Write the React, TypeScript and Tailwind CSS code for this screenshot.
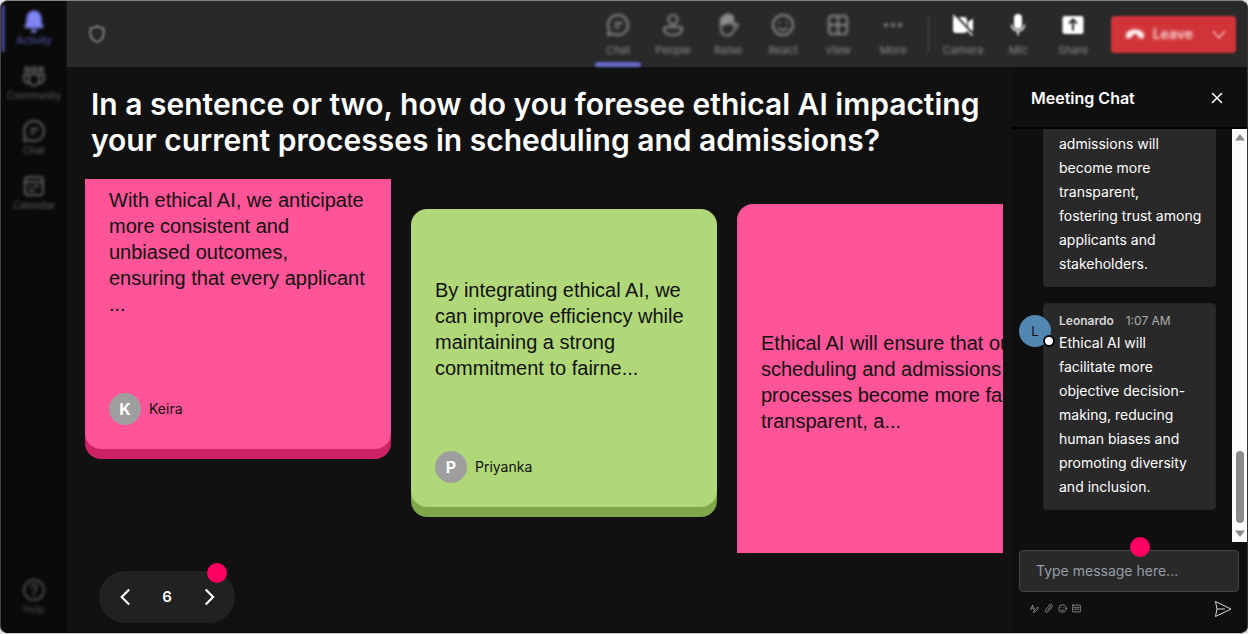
import React from 'react';
import { X } from 'lucide-react';

const stroke = {
  viewBox: '0 0 24 24',
  fill: 'none',
  stroke: 'currentColor',
  strokeWidth: 2,
  strokeLinecap: 'round' as const,
  strokeLinejoin: 'round' as const,
};

type IconProps = { className?: string };

const BellIcon = ({ className }: IconProps) => (
  <svg viewBox="0 0 24 24" fill="currentColor" className={className}>
    <path d="M12 1.5a7.5 7.5 0 0 0-7.5 7.5v4.2L2.6 17.6A1 1 0 0 0 3.500 19h17a1 1 0 0 0 .9-1.400L19.500 13.200V9A7.500 7.500 0 0 0 12 1.500zM8.800 20.500a3.200 3.200 0 0 0 6.400 0z" />
  </svg>
);

const CommunityIcon = ({ className }: IconProps) => (
  <svg {...stroke} className={className}>
    <circle cx="5" cy="5.500" r="2" />
    <circle cx="12" cy="5.500" r="2.300" />
    <circle cx="19" cy="5.500" r="2" />
    <path d="M7 10.500h10v6a5 5 0 0 1-10 0zM7 10.500H2v4.500a4 4 0 0 0 5.500 3.700M17 10.500h5v4.500a4 4 0 0 1-5.500 3.700" />
  </svg>
);

const ChatIcon = ({ className }: IconProps) => (
  <svg {...stroke} className={className}>
    <path d="M12 2a10 10 0 1 1-4.700 18.800L2 22l1.200-5.300A10 10 0 0 1 12 2z" />
    <path d="M9 10h6.500M9 14h3.500" />
  </svg>
);

const CalendarIcon = ({ className }: IconProps) => (
  <svg {...stroke} className={className}>
    <rect x="3" y="3" width="18" height="18" rx="3" />
    <path d="M3 8h18M7.500 12.500h.5M12 12.500h4.500M7.500 16.500H12" />
  </svg>
);

const HelpIcon = ({ className }: IconProps) => (
  <svg {...stroke} className={className}>
    <circle cx="12" cy="12" r="10" />
    <path d="M9.300 9.500a2.700 2.700 0 1 1 4.500 2c-1 .9-1.800 1.300-1.800 2.500M12 17v.3" />
  </svg>
);

const ShieldIcon = ({ className }: IconProps) => (
  <svg {...stroke} className={className}>
    <path d="M12 2.500c2.300 1.800 5 2.700 8 2.800v6c0 5-2.800 8.300-8 10.200-5.200-1.900-8-5.200-8-10.200v-6c3-.1 5.700-1 8-2.800z" />
  </svg>
);

const PeopleIcon = ({ className }: IconProps) => (
  <svg {...stroke} className={className}>
    <circle cx="12" cy="6.500" r="4.500" />
    <path d="M5 14h14a2 2 0 0 1 2 2c0 4-3.800 6-9 6s-9-2-9-6a2 2 0 0 1 2-2z" />
  </svg>
);

const RaiseIcon = ({ className }: IconProps) => (
  <svg {...stroke} className={className}>
    <path d="M5 12V6a1.500 1.500 0 0 1 3 0V3.500a1.500 1.500 0 0 1 3 0v-1a1.500 1.500 0 0 1 3 0V4a1.500 1.500 0 0 1 3 0v5z" fill="currentColor" />
    <path d="M5 11v5c0 4 2.500 6.500 6 6.500 3 0 4.500-1.200 6-3.500l4.500-6c.8-1.200-.8-2.700-2.300-1.900L17 13V5" />
  </svg>
);

const ReactIcon = ({ className }: IconProps) => (
  <svg {...stroke} className={className}>
    <circle cx="12" cy="12" r="10" />
    <path d="M8 15c1 1.300 2.400 2 4 2s3-.7 4-2M8.500 9.500v.2M15.500 9.500v.2" />
  </svg>
);

const ViewIcon = ({ className }: IconProps) => (
  <svg {...stroke} className={className}>
    <rect x="3" y="3" width="18" height="18" rx="3" />
    <path d="M12 3v18M3 12h18" />
  </svg>
);

const MoreIcon = ({ className }: IconProps) => (
  <svg viewBox="0 0 24 24" fill="currentColor" className={className}>
    <circle cx="5" cy="12" r="2" />
    <circle cx="12" cy="12" r="2" />
    <circle cx="19" cy="12" r="2" />
  </svg>
);

const CameraOffIcon = ({ className }: IconProps) => (
  <svg viewBox="0 0 24 24" className={className}>
    <path d="M2 6a2 2 0 0 1 2-2h9a3 3 0 0 1 3 3v10a3 3 0 0 1-3 3H5a3 3 0 0 1-3-3zM17 9l5-3.500v13L17 15z" fill="currentColor" />
    <path d="M4.500 2L23 22" stroke="#292929" strokeWidth="2" />
    <path d="M2 2l19.500 20.500" stroke="currentColor" strokeWidth="1.500" />
  </svg>
);

const MicIcon = ({ className }: IconProps) => (
  <svg viewBox="0 0 24 24" className={className}>
    <rect x="8" y="1" width="8" height="15" rx="4" fill="currentColor" />
    <path d="M5.500 11.500a6.500 6.500 0 0 0 13 0M12 18v4.500" fill="none" stroke="currentColor" strokeWidth="1.500" />
  </svg>
);

const ShareIcon = ({ className }: IconProps) => (
  <svg viewBox="0 0 24 24" className={className}>
    <rect x="1.500" y="3" width="21" height="18" rx="2.500" fill="currentColor" />
    <path d="M12 17.500V7M8 10.500L12 6.500l4 4" fill="none" stroke="#292929" strokeWidth="2" />
  </svg>
);

const HangUpIcon = ({ className }: IconProps) => (
  <svg viewBox="0 0 24 24" fill="currentColor" className={className}>
    <path d="M12 6.500c5.500 0 10 2.500 10.700 6.300.3 1.700.1 3.300-.6 4.100-.4.500-.9.600-1.500.5l-3.700-.8c-.8-.2-1.300-.8-1.300-1.600l-.1-2.200c-1-.5-2.300-.7-3.500-.7s-2.500.2-3.500.7L8.400 15c0 .8-.5 1.400-1.300 1.600l-3.700.8c-.6.100-1.100 0-1.500-.5-.7-.8-.9-2.400-.6-4.100C2 9 6.500 6.500 12 6.500z" />
  </svg>
);

const Chevron = ({ className, d }: IconProps & { d: string }) => (
  <svg {...stroke} strokeWidth={2.5} strokeLinecap="butt" strokeLinejoin="miter" className={className}>
    <path d={d} />
  </svg>
);

const navItems = [
  { label: 'Activity', icon: BellIcon, active: true },
  { label: 'Community', icon: CommunityIcon },
  { label: 'Chat', icon: ChatIcon },
  { label: 'Calendar', icon: CalendarIcon },
];

const meetingTools = [
  { label: 'Chat', icon: ChatIcon, active: true },
  { label: 'People', icon: PeopleIcon },
  { label: 'Raise', icon: RaiseIcon },
  { label: 'React', icon: ReactIcon },
  { label: 'View', icon: ViewIcon },
  { label: 'More', icon: MoreIcon },
];

const deviceTools = [
  { label: 'Camera', icon: CameraOffIcon },
  { label: 'Mic', icon: MicIcon },
  { label: 'Share', icon: ShareIcon },
];

const cards = [
  {
    text: 'With ethical AI, we anticipate more consistent and unbiased outcomes, ensuring that every applicant ...',
    author: 'Keira',
    style: '-mt-4 h-[286px] bg-[#ff5497] shadow-[0_10px_0_#cd2264] pt-6',
  },
  {
    text: 'By integrating ethical AI, we can improve efficiency while maintaining a strong commitment to fairne...',
    author: 'Priyanka',
    style: 'mt-[30px] h-[298px] bg-[#b0d878] shadow-[0_10px_0_#7fa648] pt-[68px]',
  },
  {
    text: 'Ethical AI will ensure that our scheduling and admissions processes become more fair, transparent, a...',
    author: '',
    style: 'mt-[25px] h-[420px] bg-[#ff5497] shadow-[0_10px_0_#cd2264] pt-[126px]',
  },
];

function Sidebar() {
  return (
    <nav className="flex w-[66px] shrink-0 flex-col bg-[#0a0a0a] pt-1 pb-2 text-[#606060] shadow-[0_0_3px_#0a0a0a]">
      {navItems.map((item) => (
        <button
          key={item.label}
          className={`relative flex h-[55px] w-full flex-col items-center pt-1 blur-[1px] ${
            item.active ? 'text-[#7f85f5]' : ''
          }`}
        >
          {item.active && <span className="absolute top-0 left-0 h-[47px] w-1 bg-[#3d4080]" />}
          <item.icon className="h-6 w-6 blur-[1px]" />
          <span className={`text-[10px] leading-[14px] blur-[1px] ${item.active ? 'text-[#5b5fc0]' : ''}`}>
            {item.label}
          </span>
        </button>
      ))}
      <button className="mt-auto flex h-[55px] w-full flex-col items-center pt-2 text-[#4c4c4c] blur-[1px]">
        <HelpIcon className="h-6 w-6 blur-[1px]" />
        <span className="text-[10px] leading-[14px] blur-[1px]">Help</span>
      </button>
    </nav>
  );
}

function TopBar() {
  return (
    <header className="flex h-[66px] shrink-0 items-center bg-[#292929] pr-[11px] pl-5 text-[#8c8c8c] shadow-[0_0_3px_#292929]">
      <ShieldIcon className="h-5 w-5 blur-[1px]" />
      <div className="ml-auto flex items-center">
        {meetingTools.map((tool) => (
          <button key={tool.label} className="relative flex h-[66px] w-[55px] flex-col items-center pt-3 blur-[1px]">
            <tool.icon className="h-6 w-6 blur-[1px]" />
            <span className="mt-1 text-[11px] leading-[18px] blur-[1px]">{tool.label}</span>
            {tool.active && <span className="absolute bottom-0 h-[5px] w-[46px] rounded-sm bg-[#6367c8]" />}
          </button>
        ))}
        <span className="mx-[7px] h-9 w-px bg-[#505050] blur-[1px]" />
        {deviceTools.map((tool) => (
          <button key={tool.label} className="flex h-[66px] w-[55px] flex-col items-center pt-3 blur-[1px]">
            <tool.icon className="h-6 w-6 text-white" />
            <span className="mt-1 text-[11px] leading-[18px] blur-[1px]">{tool.label}</span>
          </button>
        ))}
        <div className="ml-[10px] flex h-[37px] items-center rounded-sm bg-[#d13438] text-[#f9d8d9] blur-[1px]">
          <button className="flex h-full items-center gap-2 pl-[14px] text-sm font-semibold">
            <HangUpIcon className="h-5 w-5 text-white blur-[1px]" />
            <span className="blur-[1px]">Leave</span>
          </button>
          <button aria-label="Leave options" className="flex h-full items-center pr-[8px] pl-[17px] text-[#efa5a7]">
            <Chevron className="h-[18px] w-[18px]" d="M4 8l8 9 8-9" />
          </button>
        </div>
      </div>
    </header>
  );
}

function Board() {
  return (
    <main className="flex min-w-0 flex-1 flex-col bg-[#111111] pl-[18px] pr-2">
      <h1 className="pt-[19px] pl-[6px] text-[30px] leading-9 font-semibold text-white">
        In a sentence or two, how do you foresee ethical AI impacting your current processes in scheduling and
        admissions?
      </h1>

      <div className="mt-[21px] flex min-h-0 flex-1 items-start gap-5 overflow-hidden">
        {cards.map((card, i) => (
          <article key={i} className={`flex w-[306px] shrink-0 flex-col rounded-2xl px-6 pb-6 ${card.style}`}>
            <p className="font-['Liberation_Sans',Arial,sans-serif] text-[20px] leading-[26px] text-[#111111]">
              {card.text}
            </p>
            {card.author && (
              <div className="mt-auto flex items-center gap-2">
                <span className="flex h-8 w-8 items-center justify-center rounded-full bg-[#9e9e9e] text-base font-bold text-white">
                  {card.author[0]}
                </span>
                <span className="text-sm text-[#111111]">{card.author}</span>
              </div>
            )}
          </article>
        ))}
      </div>

      <div className="relative mt-[18px] mb-[10px] ml-[14px] flex h-[52px] w-[136px] shrink-0 items-center justify-between rounded-full bg-[#212121] px-4 text-white">
        <button aria-label="Previous">
          <Chevron className="h-5 w-5" d="M17 3l-9 9 9 9" />
        </button>
        <span className="text-[15px] font-semibold">6</span>
        <button aria-label="Next">
          <Chevron className="h-5 w-5" d="M8 3l9 9-9 9" />
        </button>
        <span className="absolute -top-2 right-2 h-5 w-5 rounded-full bg-[#ff0062]" />
      </div>
    </main>
  );
}

function ChatPanel() {
  return (
    <aside className="flex w-[236px] shrink-0 flex-col bg-[#0f0f0f] text-white">
      <div className="flex h-[62px] shrink-0 items-center justify-between border-b-2 border-black pt-[2px] pr-[21px] pl-5">
        <h2 className="text-base font-semibold">Meeting Chat</h2>
        <button aria-label="Close">
          <X className="h-[18px] w-[18px]" strokeWidth={2} />
        </button>
      </div>

      <div className="flex min-h-0 flex-1">
        <div className="min-w-0 flex-1 overflow-hidden pr-4 pl-2 text-sm leading-6">
          <div className="ml-6 rounded-b bg-[#292929] pt-[3px] pr-3 pb-[11px] pl-4">
            admissions will become more transparent,
            <br />
            fostering trust among applicants and stakeholders.
          </div>
          <div className="relative mt-4 ml-6 rounded border border-[#242424] bg-[#292929] px-[15px] pt-[7px] pb-[10px]">
            <span className="absolute top-[11px] -left-[25px] flex h-8 w-8 items-center justify-center rounded-full bg-[#5187b0] text-[13px] text-[#111111]">
              L
            </span>
            <span className="absolute top-[31px] -left-px h-3 w-3 rounded-full border-2 border-black bg-white" />
            <div className="flex items-center gap-3 text-xs leading-5">
              <span className="font-semibold text-[#d6d6d6]">Leonardo</span>
              <span className="text-[#adadad]">1:07 AM</span>
            </div>
            Ethical AI will facilitate more objective decision-making, reducing human biases and promoting diversity
            and inclusion.
          </div>
        </div>

        {/* Scrollbar */}
        <div className="flex w-[15px] flex-col items-center bg-[#fcfcfc] py-[5px] text-[#8b8b8b]">
          <svg viewBox="0 0 10 7" fill="currentColor" className="h-[7px] w-[10px]">
            <path d="M5 0l5 6.500H0z" />
          </svg>
          <div className="mt-auto mb-[7px] h-[72px] w-2 rounded-full bg-[#8b8b8b]" />
          <svg viewBox="0 0 10 7" fill="currentColor" className="h-[7px] w-[10px]">
            <path d="M5 7l5-6.500H0z" />
          </svg>
        </div>
      </div>

      <div className="relative mt-2 px-2">
        <input
          type="text"
          aria-label="Message"
          placeholder="Type message here..."
          className="block h-[42px] w-full rounded border border-[#454545] bg-[#292929] px-4 pb-[2px] text-sm text-white outline-none placeholder:text-[#949da6]"
        />
        <span className="absolute -top-[13px] left-[119px] h-5 w-5 rounded-full bg-[#ff0062]" />
      </div>
      <div className="flex h-[41px] items-center justify-between pr-[15px] pb-2 pl-[19px]">
        <div className="flex items-center gap-[5px] text-[#a3a3a3]">
          <button aria-label="Format">
            <svg {...stroke} className="h-[9px] w-[9px]">
              <path d="M1 16L7 3l4 13M3 11h7M9 21L20 8l3 3-11 11H9z" />
            </svg>
          </button>
          <button aria-label="Attach">
            <svg {...stroke} className="h-[9px] w-[9px]">
              <path d="M9 17l8-9a2 2 0 0 0-3-3L4 15a4 4 0 0 0 6 6L21 9a5 5 0 0 0-8-7" />
            </svg>
          </button>
          <button aria-label="Emoji">
            <ReactIcon className="h-[9px] w-[9px]" />
          </button>
          <button aria-label="GIF">
            <svg {...stroke} className="h-[9px] w-[9px]">
              <rect x="1" y="3" width="22" height="18" rx="2" />
              <path d="M5 9h7M15 9h4M5 14h14" />
            </svg>
          </button>
        </div>
        <button aria-label="Send">
          <svg viewBox="0 0 18 18" fill="none" stroke="#d9d9d9" strokeLinejoin="round" className="h-[18px] w-[18px]">
            <path d="M1.500 1.500L17 9 1.500 16.500 3 9zM3 9h8" />
          </svg>
        </button>
      </div>
    </aside>
  );
}

export default function App() {
  return (
    <div className="h-screen bg-[#e4e4e4] font-[Inter,sans-serif]">
      <div className="flex h-full overflow-hidden rounded-lg border border-t-[#858585] border-r-[#333333] border-b-[#c4c4c4] border-l-[#444444] bg-[#111111]">
        <Sidebar />
        <div className="flex min-w-0 flex-1 flex-col">
          <TopBar />
          <div className="flex min-h-0 flex-1">
            <Board />
            <ChatPanel />
          </div>
        </div>
      </div>
    </div>
  );
}
